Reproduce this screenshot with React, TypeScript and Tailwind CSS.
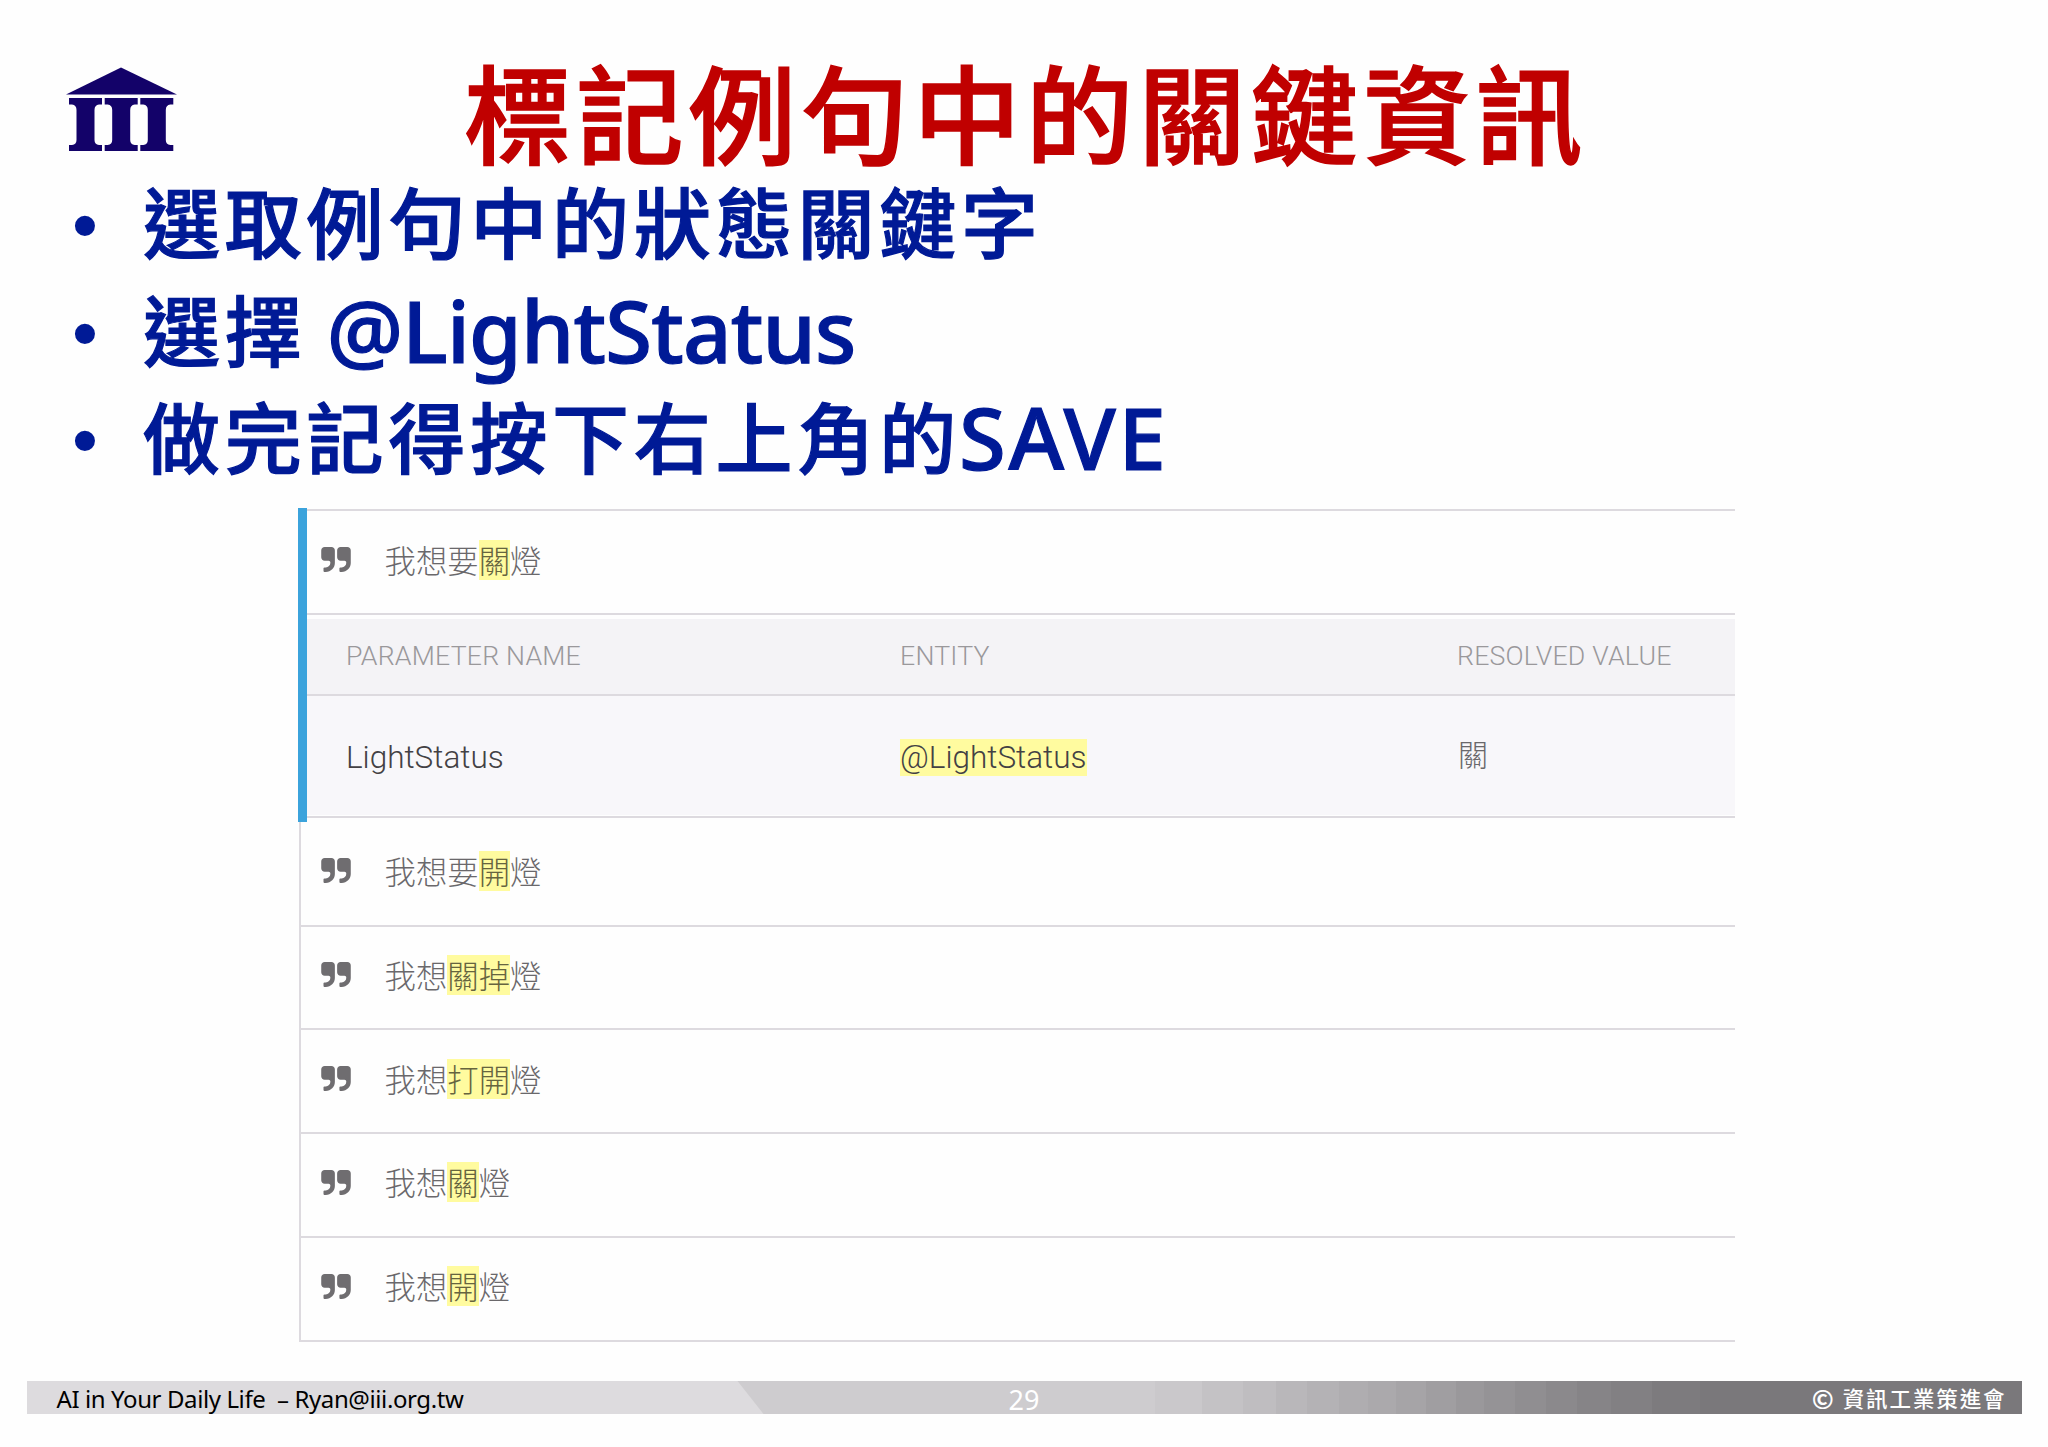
import { clsx } from "clsx";

interface Phrase {
  before: string;
  marked: string;
  after: string;
}

const SELECTED_PHRASE: Phrase = { before: "我想要", marked: "關", after: "燈" };

const PHRASES: Phrase[] = [
  { before: "我想要", marked: "開", after: "燈" },
  { before: "我想", marked: "關掉", after: "燈" },
  { before: "我想", marked: "打開", after: "燈" },
  { before: "我想", marked: "關", after: "燈" },
  { before: "我想", marked: "開", after: "燈" },
];

const CJK = "font-['Noto_Sans_CJK_TC',sans-serif]";

function Logo() {
  return (
    <svg viewBox="0 0 111 86" className="h-[86px] w-[111px]" fill="#130269">
      <path d="M55 0.5 0 27.5H111Z" />
      {[3, 38.7, 74.3].map((x) => (
        <path
          key={x}
          transform={`translate(${x} 31)`}
          d="M0 0H33V6.5H30Q25.500 7 25.500 12V42Q25.500 46.500 30 47H33V53H0V47H3Q7.500 46.500 7.500 42V12Q7.500 7 3 6.500H0Z"
        />
      ))}
    </svg>
  );
}

function QuoteIcon() {
  const mark =
    "M768 320v704q0 104-40.500 198.500t-109.500 163.500-163.500 109.500-198.500 40.500h-64q-26 0-45-19t-19-45v-128q0-26 19-45t45-19h64q106 0 181-75t75-181v-32q0-40-28-68t-68-28h-224q-80 0-136-56t-56-136v-384q0-80 56-136t136-56h384q80 0 136 56t56 136z";
  return (
    <svg
      viewBox="0 128 1664 1408"
      className="h-[25px] w-[30px] shrink-0"
      fill="#6f6d70"
      aria-hidden="true"
    >
      <path d={mark} />
      <path d={mark} transform="translate(896 0)" />
    </svg>
  );
}

function PhraseRow({ phrase, className }: { phrase: Phrase; className?: string }) {
  return (
    <div className={clsx("flex items-center border-b-2 border-[#dddadf]", className)}>
      <QuoteIcon />
      <p
        className={clsx(
          CJK,
          "ml-[33.5px] flex text-[31.4px] leading-10 font-light text-[#6a686b]",
        )}
      >
        <span>{phrase.before}</span>
        <mark className="bg-[#fffb9f] text-[#66643f]">{phrase.marked}</mark>
        <span>{phrase.after}</span>
      </p>
    </div>
  );
}

function Bullet({ children }: { children: React.ReactNode }) {
  return (
    <li className="flex h-[107.7px] text-[#001a96]">
      <span className="w-[71px] font-['Liberation_Sans',sans-serif] text-[74px] leading-[120px]">
        •
      </span>
      <span
        className={clsx(
          CJK,
          "text-[77px] leading-[107.7px] font-medium tracking-[4.8px] whitespace-pre [-webkit-text-stroke:1.2px]",
        )}
      >
        {children}
      </span>
    </li>
  );
}

function Latin({ className, children }: { className: string; children: React.ReactNode }) {
  return (
    <span
      className={clsx(
        "-ml-0.5 inline-block translate-y-0.5 font-['Noto_Sans',sans-serif] text-[85px] leading-none font-medium",
        className,
      )}
    >
      {children}
    </span>
  );
}

// The agent console: one opened phrase with its parameters, the rest collapsed.
function PhraseTable() {
  return (
    <section className="ml-[298px] w-[1437px] font-[Roboto,sans-serif]">
      <div className="h-[314px] border-l-[9px] border-[#3ba3dc] pt-px">
        <PhraseRow
          phrase={SELECTED_PHRASE}
          className="h-[106px] border-t-2 pb-[5px] pl-3.5"
        />
        <div className="mt-1 grid h-[77px] grid-cols-[554px_557px_1fr] items-center border-b-2 border-[#dddadf] bg-[#f4f3f6] pl-[39px] text-[26.7px] font-light tracking-[0.2px] text-[#9a989b]">
          <span>PARAMETER NAME</span>
          <span>ENTITY</span>
          <span>RESOLVED VALUE</span>
        </div>
        <div className="grid h-[119px] grid-cols-[554px_557px_1fr] items-center bg-[#f8f7fa] pl-[39px] text-[31.5px] font-light text-[#434144]">
          <span className="pt-1">LightStatus</span>
          <span className="pt-1">
            <mark className="bg-[#fffb9f] text-inherit">@LightStatus</mark>
          </span>
          <span className={clsx(CJK, "pb-1 pl-px text-[30px] text-[#6a686b]")}>關</span>
        </div>
        <div className="mt-px h-0.5 bg-[#dddadf]" />
      </div>
      <div className="ml-px border-l-2 border-[#dddadf]">
        {PHRASES.map((phrase, i) => (
          <PhraseRow
            key={i}
            phrase={phrase}
            className={clsx("pl-5", i === 0 ? "h-[104.5px] pb-[5px]" : "h-[103.8px] pb-[5px]")}
          />
        ))}
      </div>
    </section>
  );
}

function Footer() {
  return (
    <footer className="ml-[26.5px] grid h-[33px] w-[1995px] grid-cols-3 items-center bg-[linear-gradient(90deg,#cecccf_1128px,#cac8cb_1128px_1175px,#c4c2c5_1175px_1216px,#bfbdc0_1216px_1249px,#b9b7ba_1249px_1280px,#b4b2b5_1280px_1312px,#afadb0_1312px_1341px,#aba9ac_1341px_1369px,#a6a4a7_1369px_1399px,#a09ea1_1399px_1429px,#9a989b_1429px_1457px,#959396_1457px_1488px,#908e91_1488px_1519px,#8b898c_1519px_1550px,#868487_1550px_1584px,#828083_1584px_1625px,#7d7b7e_1625px_1673px,#7a787b_1673px)]">
      <div className="flex h-[33px] w-[737px] items-center bg-[#dddbde] pt-0.5 pl-[30px] font-['Noto_Sans',sans-serif] text-[24px] leading-8 tracking-[-0.4px] whitespace-pre text-black [clip-path:polygon(0_0,711px_0,737px_100%,0_100%)]">
        AI in Your Daily Life  – Ryan@iii.org.tw
      </div>
      <span className="pt-[5px] text-center font-['Noto_Sans',sans-serif] text-[27px] leading-7 text-white">
        29
      </span>
      <span
        className={clsx(
          CJK,
          "flex items-center justify-end pr-[15px] text-[21.5px] leading-8 font-medium tracking-[1.9px] text-white",
        )}
      >
        <span className="mr-[7px] text-[26px] font-bold">©</span>
        資訊工業策進會
      </span>
    </footer>
  );
}

export default function App() {
  return (
    <main className="flex h-[1447px] w-[2048px] flex-col overflow-hidden bg-[#fefefe]">
      <header className="flex h-[166px] items-start">
        <div className="w-[464px] pt-[67px] pl-[65.5px]">
          <Logo />
        </div>
        <h1
          className={clsx(
            CJK,
            "pt-[53.5px] text-[107px] leading-[112px] font-medium tracking-[5.4px] text-[#c00000] [-webkit-text-stroke:1.6px]",
          )}
        >
          標記例句中的關鍵資訊
        </h1>
      </header>
      <ul className="h-[342px] pl-[72px]">
        <Bullet>選取例句中的狀態關鍵字</Bullet>
        <Bullet>
          選擇 <Latin className="tracking-[-0.8px]">@LightStatus</Latin>
        </Bullet>
        <Bullet>
          做完記得按下右上角的<Latin className="tracking-[2.7px]">SAVE</Latin>
        </Bullet>
      </ul>
      <PhraseTable />
      <div className="grow" />
      <div className="pb-[33px]">
        <Footer />
      </div>
    </main>
  );
}
